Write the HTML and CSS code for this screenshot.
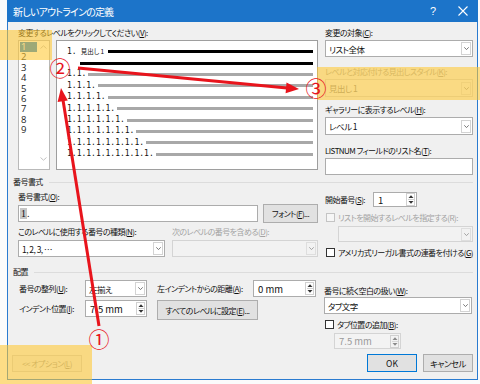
FILE: index.html
```html
<!DOCTYPE html>
<html lang="ja">
<head>
<meta charset="utf-8">
<title>新しいアウトラインの定義</title>
<link rel="stylesheet" href="styles.css">
</head>
<body>
<div class="dialog">
  <div class="titlebar">
    <span class="title">新しいアウトラインの定義</span>
    <span class="tb-btns">
      <span class="tb-btn help">?</span>
      <span class="tb-btn"><svg width="10" height="10" viewBox="0 0 10 10"><path d="M0.5 0.5L9.5 9.5M9.5 0.5L0.5 9.5" stroke="#fff" stroke-width="1.1"/></svg></span>
    </span>
  </div>
  <div class="main">
    <div class="top">
      <div class="top-left">
        <div class="lbl">変更するレベルをクリックしてください(<u>V</u>):</div>
        <div class="top-row">
          <div class="levels">
            <div class="items">
              <div class="item sel">1</div>
              <div class="item">2</div>
              <div class="item">3</div>
              <div class="item">4</div>
              <div class="item">5</div>
              <div class="item">6</div>
              <div class="item">7</div>
              <div class="item">8</div>
              <div class="item">9</div>
            </div>
            <div class="sbar">
              <svg width="7" height="4" viewBox="0 0 7 4"><path d="M0.5 3.5L3.5 0.8L6.5 3.5" fill="none" stroke="#c2c2c2"/></svg>
              <svg width="7" height="4" viewBox="0 0 7 4"><path d="M0.5 0.5L3.5 3.2L6.5 0.5" fill="none" stroke="#c2c2c2"/></svg>
            </div>
          </div>
          <div class="preview">
            <div class="prow"><span class="pn">1.</span><span class="h1t">見出し 1</span><span class="bar black first"></span></div>
            <div class="prow cont"><span class="bar black"></span></div>
            <div class="prow"><span class="pn">1.1.</span><span class="bar"></span></div>
            <div class="prow"><span class="pn">1.1.1.</span><span class="bar"></span></div>
            <div class="prow"><span class="pn">1.1.1.1.</span><span class="bar"></span></div>
            <div class="prow"><span class="pn">1.1.1.1.1.</span><span class="bar"></span></div>
            <div class="prow"><span class="pn">1.1.1.1.1.1.</span><span class="bar"></span></div>
            <div class="prow"><span class="pn">1.1.1.1.1.1.1.</span><span class="bar"></span></div>
            <div class="prow"><span class="pn">1.1.1.1.1.1.1.1.</span><span class="bar"></span></div>
            <div class="prow"><span class="pn">1.1.1.1.1.1.1.1.1.</span><span class="bar"></span></div>
          </div>
        </div>
      </div>
      <div class="rc">
        <div class="lbl">変更の対象(<u>C</u>):</div>
        <div class="combo c1"><span class="cv">リスト全体</span><span class="dd"><svg width="5" height="3" viewBox="0 0 5 3"><path d="M0.3 0.3L2.5 2.6L4.7 0.3" fill="none" stroke="#6a6a6a" stroke-width="0.9"/></svg></span></div>
        <div class="lbl dis l2">レベルと対応付ける見出しスタイル(<u>K</u>):</div>
        <div class="combo disabled c2"><span class="cv">見出し 1</span><span class="dd"><svg width="5" height="3" viewBox="0 0 5 3"><path d="M0.3 0.3L2.5 2.6L4.7 0.3" fill="none" stroke="#9a9a9a" stroke-width="0.9"/></svg></span></div>
        <div class="lbl l3">ギャラリーに表示するレベル(<u>H</u>):</div>
        <div class="combo c3"><span class="cv">レベル 1</span><span class="dd"><svg width="5" height="3" viewBox="0 0 5 3"><path d="M0.3 0.3L2.5 2.6L4.7 0.3" fill="none" stroke="#6a6a6a" stroke-width="0.9"/></svg></span></div>
        <div class="lbl l4">LISTNUM フィールドのリスト名(<u>T</u>):</div>
        <div class="field c4"></div>
      </div>
    </div>

    <div class="sec-title">番号書式</div>
    <div class="fmt">
      <div class="fmt-left">
        <div class="lbl">番号書式(<u>O</u>):</div>
        <div class="fmt-row">
          <div class="field fmt-in"><span class="fld">1</span><span class="dot">.</span></div>
          <div class="btn font-btn">フォント(<u>F</u>)...</div>
        </div>
        <div class="fmt-row2">
          <div class="lbl w147">このレベルに使用する番号の種類(<u>N</u>):</div>
          <div class="lbl dis">次のレベルの番号を含める(<u>D</u>):</div>
        </div>
        <div class="fmt-row3">
          <div class="combo w147"><span class="cv">1, 2, 3, …</span><span class="dd"><svg width="5" height="3" viewBox="0 0 5 3"><path d="M0.3 0.3L2.5 2.6L4.7 0.3" fill="none" stroke="#6a6a6a" stroke-width="0.9"/></svg></span></div>
          <div class="combo disabled w146"><span class="cv"></span><span class="dd"><svg width="5" height="3" viewBox="0 0 5 3"><path d="M0.3 0.3L2.5 2.6L4.7 0.3" fill="none" stroke="#9a9a9a" stroke-width="0.9"/></svg></span></div>
        </div>
      </div>
      <div class="rc fmt-right">
        <div class="start-row">
          <span class="lbl">開始番号(<u>S</u>):</span>
          <div class="spin start-spin"><span class="sv">1</span><span class="sb"><svg width="6" height="11" viewBox="0 0 6 11"><path d="M0.5 4L3 1.3L5.5 4Z" fill="#333"/><path d="M0 5.5H6" stroke="#d0d0d0"/><path d="M0.5 7L3 9.7L5.5 7Z" fill="#333"/></svg></span></div>
        </div>
        <div class="cb-row r1"><span class="cb dis-cb"></span><span class="lbl dis">リストを開始するレベルを指定する(R):</span></div>
        <div class="combo disabled lvl-sel"><span class="cv"></span><span class="dd"><svg width="5" height="3" viewBox="0 0 5 3"><path d="M0.3 0.3L2.5 2.6L4.7 0.3" fill="none" stroke="#9a9a9a" stroke-width="0.9"/></svg></span></div>
        <div class="cb-row r2"><span class="cb"></span><span class="lbl">アメリカ式リーガル書式の連番を付ける(<u>G</u>)</span></div>
      </div>
    </div>

    <div class="sec-title s2">配置</div>
    <div class="align">
      <div class="align-left">
        <div class="arow">
          <span class="lbl al-l">番号の整列(<u>U</u>):</span>
          <div class="combo w62"><span class="cv">左揃え</span><span class="dd"><svg width="5" height="3" viewBox="0 0 5 3"><path d="M0.3 0.3L2.5 2.6L4.7 0.3" fill="none" stroke="#6a6a6a" stroke-width="0.9"/></svg></span></div>
          <span class="lbl al-m">左インデントからの距離(<u>A</u>):</span>
          <div class="spin w63"><span class="sv">0 mm</span><span class="sb"><svg width="6" height="11" viewBox="0 0 6 11"><path d="M0.5 4L3 1.3L5.5 4Z" fill="#333"/><path d="M0 5.5H6" stroke="#d0d0d0"/><path d="M0.5 7L3 9.7L5.5 7Z" fill="#333"/></svg></span></div>
        </div>
        <div class="arow r2">
          <span class="lbl al-l">インデント位置(<u>I</u>):</span>
          <div class="spin w62"><span class="sv">7.5 mm</span><span class="sb"><svg width="6" height="11" viewBox="0 0 6 11"><path d="M0.5 4L3 1.3L5.5 4Z" fill="#333"/><path d="M0 5.5H6" stroke="#d0d0d0"/><path d="M0.5 7L3 9.7L5.5 7Z" fill="#333"/></svg></span></div>
          <div class="btn all-btn">すべてのレベルに設定(<u>E</u>)...</div>
        </div>
      </div>
      <div class="rc align-right">
        <div class="lbl">番号に続く空白の扱い(<u>W</u>):</div>
        <div class="combo"><span class="cv">タブ文字</span><span class="dd"><svg width="5" height="3" viewBox="0 0 5 3"><path d="M0.3 0.3L2.5 2.6L4.7 0.3" fill="none" stroke="#6a6a6a" stroke-width="0.9"/></svg></span></div>
        <div class="cb-row r3"><span class="cb"></span><span class="lbl">タブ位置の追加(<u>B</u>):</span></div>
        <div class="spin disabled tab-spin"><span class="sv">7.5 mm</span><span class="sb"><svg width="6" height="11" viewBox="0 0 6 11"><path d="M0.5 4L3 1.3L5.5 4Z" fill="#8a8a8a"/><path d="M0 5.5H6" stroke="#d8d8d8"/><path d="M0.5 7L3 9.7L5.5 7Z" fill="#8a8a8a"/></svg></span></div>
      </div>
    </div>

    <div class="footer">
      <div class="btn opt-btn">&lt;&lt; オプション(<u>L</u>)</div>
      <div class="btn ok-btn">OK</div>
      <div class="btn cancel-btn">キャンセル</div>
    </div>
  </div>
</div>

<div class="hl hl-a"></div>
<div class="hl hl-b"></div>
<div class="hl hl-c"></div>

<svg class="arrows" width="480" height="384" viewBox="0 0 480 384">
  <path d="M99 326L63 100" stroke="#e8141c" stroke-width="3" fill="none"/>
  <polygon points="61,88 67.8,100.6 57.6,102" fill="#e8141c"/>
  <path d="M78 68L287 88" stroke="#e8141c" stroke-width="3" fill="none"/>
  <polygon points="299,89 285.6,93.2 286.5,82.6" fill="#e8141c"/>
</svg>
<span class="mark m1">①</span>
<span class="mark m2">②</span>
<span class="mark m3">③</span>
</body>
</html>
```

FILE: styles.css
```css
* { box-sizing: border-box; }

body {
  margin: 0;
  width: 480px;
  height: 384px;
  position: relative;
  overflow: hidden;
  background: #fbfbfb;
  font-family: "Noto Sans CJK JP", "Noto Sans", sans-serif;
  font-feature-settings: "palt";
  font-size: 8px;
  letter-spacing: -0.55px;
  color: #111;
}

u { text-decoration-thickness: 1px; text-underline-offset: 1px; }

.dialog {
  margin-left: 7px;
  width: 471px;
  height: 380px;
  background: #f0f0f0;
  border: 1px solid #2a7bd0;
  border-top: none;
  display: flex;
  flex-direction: column;
}

.titlebar {
  height: 22px;
  margin: 0 -1px;
  background: #1c74c9;
  color: #fff;
  display: flex;
  align-items: center;
  justify-content: space-between;
  padding-left: 6px;
}
.title { font-size: 10px; letter-spacing: -0.8px; }
.tb-btns { display: flex; }
.tb-btn { width: 30px; height: 22px; display: flex; align-items: center; justify-content: center; }
.tb-btn.help { font-family: "Liberation Sans", sans-serif; font-size: 11px; letter-spacing: 0; }

.main {
  flex: 1;
  display: flex;
  flex-direction: column;
  padding: 4px 4px 7px 5px;
}

.lbl { height: 13px; line-height: 13px; white-space: nowrap; }
.dis { color: #a3a3a3; }

/* top area */
.top { display: flex; gap: 7px; padding-left: 5px; }
.top-left { width: 300px; }
.top-row { display: flex; gap: 6px; margin-top: 1px; }

.levels {
  width: 32px;
  height: 130px;
  background: #fff;
  border: 1px solid #b9b9b9;
  display: flex;
}
.items { flex: 1; padding: 1px 0 0 1px; }
.item {
  height: 10.4px;
  line-height: 10.4px;
  padding-left: 1px;
  font-family: "Open Sans", "Noto Sans", sans-serif;
  font-size: 9.5px;
  letter-spacing: 0;
  color: #222;
}
.item.sel { background: #1a7fd6; color: #fff; width: 17px; }
.sbar {
  width: 12px;
  flex-shrink: 0;
  display: flex;
  flex-direction: column;
  justify-content: space-between;
  align-items: center;
  padding: 4px 0 8px;
}

.preview {
  width: 262px;
  height: 130px;
  background: #fff;
  border: 1px solid #9e9e9e;
  padding: 5px 4px 0 10px;
}
.prow { height: 11.4px; display: flex; align-items: center; }
.prow.cont { padding-left: 13px; }
.pn { font-family: "DejaVu Sans Mono", monospace; font-size: 8px; line-height: 1; letter-spacing: 0; color: #111; }
.h1t { font-size: 6.5px; margin-left: 4px; line-height: 1; letter-spacing: 0; }
.bar { flex: 1; height: 3px; background: #a8a8a8; margin-left: 2px; }
.bar.black { background: #000; margin-left: 0; }
.bar.first { margin-left: 4px; }

/* right column */
.rc { width: 148px; display: flex; flex-direction: column; }
.combo {
  height: 17px;
  background: #fff;
  border: 1px solid #acacac;
  display: flex;
  align-items: center;
  padding-left: 3px;
}
.combo.disabled { background: #f2f2f2; border-color: #d4d4d4; color: #8a8a8a; }
.cv { flex: 1; white-space: nowrap; font-size: 8.5px; }
.dd {
  width: 10px;
  height: 13px;
  flex-shrink: 0;
  margin-right: 1px;
  border: 1px solid #d3d3d3;
  display: flex;
  align-items: center;
  justify-content: center;
  background: #fff;
}
.combo.disabled .dd { background: #f2f2f2; border-color: #dedede; }
.c1 { margin-top: 1px; }
.l2 { margin-top: 8px; }
.c2 { margin-top: 1px; height: 18px; }
.l3 { margin-top: 6px; }
.c3 { margin-top: 1px; height: 18px; }
.l4 { margin-top: 9px; }
.field { background: #fff; border: 1px solid #acacac; height: 17px; }
.c4 { margin-top: 1px; }

/* sections */
.sec-title {
  display: flex;
  align-items: center;
  height: 12px;
  line-height: 12px;
  margin-top: 1px;
}
.sec-title::after {
  content: "";
  flex: 1;
  height: 1px;
  background: #dcdcdc;
  margin-left: 6px;
}
.sec-title.s2 { margin-top: 7px; }

.fmt { display: flex; gap: 7px; padding-left: 5px; }
.fmt-left { width: 300px; padding-top: 2px; }
.fmt-row { display: flex; align-items: center; gap: 5px; margin-top: 0; height: 20px; }
.fmt-in { width: 240px; display: flex; align-items: center; padding-left: 1px; font-family: "Liberation Serif", serif; font-size: 10px; letter-spacing: 0; }
.fld { background: #c6c6c6; padding: 0 1px; line-height: 11px; }
.btn {
  height: 19px;
  border: 1px solid #adadad;
  background: #e1e1e1;
  display: flex;
  align-items: center;
  justify-content: center;
  white-space: nowrap;
}
.font-btn { width: 55px; }
.fmt-row2 { display: flex; gap: 7px; margin-top: 2px; }
.w147 { width: 147px; }
.w146 { width: 146px; }
.fmt-row3 { display: flex; gap: 7px; margin-top: 2px; }

.fmt-right { padding-top: 4px; }
.start-row { display: flex; align-items: center; gap: 7px; height: 15px; }
.spin {
  height: 17px;
  background: #fff;
  border: 1px solid #acacac;
  display: flex;
  align-items: center;
}
.spin.disabled { background: #f3f3f3; border-color: #d4d4d4; color: #9a9a9a; }
.sv { flex: 1; padding-left: 4px; white-space: nowrap; font-size: 9.5px; letter-spacing: 0; }
.sb {
  width: 9px;
  height: 13px;
  flex-shrink: 0;
  margin-right: 1px;
  border: 1px solid #d0d0d0;
  display: flex;
  align-items: center;
  justify-content: center;
}
.start-spin { width: 44px; height: 15px; margin-left: 1px; }
.cb-row { display: flex; align-items: center; gap: 3px; height: 13px; }
.cb { width: 9px; height: 9px; flex-shrink: 0; border: 1px solid #333; background: #fff; margin-left: 1px; }
.cb.dis-cb { border-color: #c4c4c4; background: #f6f6f6; }
.cb-row.r1 { margin-top: 4px; }
.lvl-sel { margin-top: 2px; margin-left: 13px; height: 16px; }
.cb-row.r2 { margin-top: 4px; }

/* alignment */
.align { display: flex; gap: 8px; padding-left: 5px; }
.align-left { width: 299px; padding-top: 2px; }
.arow { display: flex; align-items: center; height: 17px; }
.arow.r2 { margin-top: 3px; align-items: flex-start; height: 20px; }
.arow.r2 .lbl { margin-top: 2px; }
.al-l { width: 67px; flex-shrink: 0; padding-left: 1px; }
.al-m { width: 96px; flex-shrink: 0; margin-left: 10px; }
.w62 { width: 62px; flex-shrink: 0; }
.w63 { width: 63px; flex-shrink: 0; }
.all-btn { width: 101px; margin-left: 10px; height: 20px; }
.align-right { padding-top: 6px; margin-left: -1px; }
.cb-row.r3 { margin-top: 4px; }
.tab-spin { width: 67px; margin-left: 10px; margin-top: 2px; height: 16px; }

/* footer */
.footer { margin-top: auto; display: flex; align-items: center; gap: 6px; margin-left: -1px; }
.opt-btn { width: 70px; height: 17px; color: #9a9a9a; background: #ececec; border-color: #cfcfcf; }
.ok-btn { margin-left: auto; width: 50px; height: 18px; border-color: #0078d7; letter-spacing: 0; font-size: 8.5px; }
.cancel-btn { width: 50px; height: 18px; font-size: 8.5px; }

/* annotations */
.hl { position: absolute; background: rgba(255, 200, 50, 0.58); }
.hl-a { left: 0; top: 30px; width: 52px; height: 30px; }
.hl-b { left: 317px; top: 67px; width: 163px; height: 33px; }
.hl-c { left: 0; top: 345px; width: 92px; height: 39px; }

.arrows { position: absolute; left: 0; top: 0; }

.mark {
  position: absolute;
  width: 24px;
  height: 24px;
  display: flex;
  align-items: center;
  justify-content: center;
  color: #e8141c;
  font-family: "Noto Sans CJK JP", sans-serif;
  font-size: 21px;
  letter-spacing: 0;
  line-height: 1;
}
.m1 { left: 87px; top: 326px; }
.m2 { left: 48px; top: 55px; }
.m3 { left: 304px; top: 75px; }
```
